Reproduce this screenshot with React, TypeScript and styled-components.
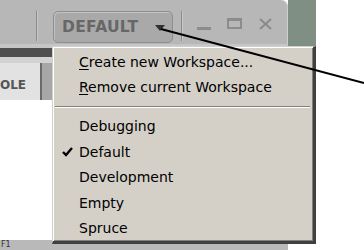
import { FC } from "react";
import styled, { createGlobalStyle } from "styled-components";

const GlobalStyle = createGlobalStyle`
  html, body {
    margin: 0;
    padding: 0;
    background: #ffffff;
    overflow: hidden;
  }
`;

const Stage = styled.div({
  position: "relative",
  width: "364px",
  height: "250px",
  overflow: "hidden",
  display: "grid",
  gridTemplateColumns: "288px 28px 1fr",
  alignItems: "start",
  fontFamily: '"DejaVu Sans", sans-serif',
});

const Window = styled.div({
  display: "flex",
  flexDirection: "column",
  height: "250px",
  background: "#b7b7b7",
  borderTopRightRadius: "7px",
  boxShadow: "inset -1px 0 0 #cfcfcf",
});

const Backdrop = styled.div({
  background: "#7f8f83",
  height: "50px",
});

const Toolbar = styled.div({
  height: "44px",
  display: "flex",
  alignItems: "flex-start",
  paddingTop: "11px",
  boxSizing: "border-box",
});

const Separator = styled.div<{ $left: number }>(({ $left }) => ({
  width: "1px",
  height: "30px",
  marginLeft: `${$left}px`,
  background: "#8a8a8a",
  boxShadow: "1px 0 0 #c8c8c8",
}));

const WorkspaceButton = styled.div({
  marginLeft: "16px",
  width: "120px",
  height: "32px",
  boxSizing: "border-box",
  display: "flex",
  alignItems: "center",
  paddingLeft: "8px",
  border: "1px solid #8e8e8e",
  borderRadius: "5px",
  background: "#a9a9a9",
  boxShadow: "inset 1px 1px 0 #c2c2c2",
  color: "#676767",
  fontWeight: 700,
  fontSize: "15.5px",
  letterSpacing: "0.3px",
});

const Caret = styled.span({
  marginLeft: "17px",
  width: 0,
  height: 0,
  borderLeft: "5px solid transparent",
  borderRight: "5px solid transparent",
  borderTop: "6px solid #303030",
  marginTop: "2px",
});

const WindowControls = styled.div({
  display: "flex",
  alignItems: "center",
  height: "30px",
  marginLeft: "15px",
  gap: "16px",
});

const Minimize = styled.div({
  width: "14px",
  height: "3px",
  background: "#8c8c8c",
  marginTop: "4px",
});

const Maximize = styled.div({
  width: "15px",
  height: "11px",
  boxSizing: "border-box",
  border: "2px solid #8c8c8c",
  borderTopWidth: "3px",
  marginTop: "-5px",
});

const CloseGlyph = styled.svg({
  marginTop: "-5px",
});

const TopGap = styled.div({
  height: "4px",
  background: "#c6c6c6",
});

const DarkBand = styled.div({
  height: "9px",
  background: "#4f4f4f",
});

const TabRow = styled.div({
  height: "43px",
  display: "flex",
  alignItems: "stretch",
  background: "#a7a7a7",
  paddingTop: "6px",
  boxSizing: "border-box",
  boxShadow: "inset 0 6px 0 #d2d2d2",
});

const Tab = styled.div({
  width: "42px",
  background: "#e2e2e2",
  borderRight: "2px solid #6a6a6a",
  display: "flex",
  alignItems: "center",
  color: "#555555",
  fontWeight: 700,
  fontSize: "12px",
  paddingLeft: "0px",
  paddingTop: "6px",
  boxSizing: "border-box",
});

const Content = styled.div({
  flex: 1,
  background: "#ffffff",
});

const StatusBar = styled.div({
  height: "10px",
  background: "#b9b9b9",
  color: "#333333",
  fontSize: "8px",
  lineHeight: "10px",
  paddingLeft: "1px",
});

const Menu = styled.div({
  position: "absolute",
  left: "52px",
  top: "46px",
  width: "264px",
  height: "198px",
  boxSizing: "border-box",
  background: "#d4d0c8",
  borderStyle: "solid",
  borderWidth: "1px 3px 3px 1px",
  borderColor: "#d4d0c8 #404040 #404040 #d4d0c8",
  boxShadow: "inset 1px 1px 0 #ffffff, inset -1px -1px 0 #808080",
  paddingTop: "2px",
  display: "flex",
  flexDirection: "column",
});

const MenuItem = styled.div({
  position: "relative",
  height: "25.5px",
  flexShrink: 0,
  display: "flex",
  alignItems: "center",
  paddingLeft: "26px",
  fontSize: "14px",
  color: "#000000",
  whiteSpace: "nowrap",
  "& u": { textUnderlineOffset: "2px" },
});

const Check = styled.svg({
  position: "absolute",
  left: "9px",
  top: "8px",
});

const MenuSeparator = styled.div({
  height: "13.5px",
  flexShrink: 0,
  display: "flex",
  alignItems: "center",
  padding: "0 3px 0 2px",
  "&::after": {
    content: '""',
    flex: 1,
    height: "1px",
    background: "#808080",
    boxShadow: "0 1px 0 #ffffff",
  },
});

const Pointer = styled.svg({
  position: "absolute",
  left: 0,
  top: 0,
  pointerEvents: "none",
});

const workspaces = ["Debugging", "Default", "Development", "Empty", "Spruce"];

const App: FC = () => {
  return (
    <>
      <GlobalStyle />
      <Stage>
        <Window>
          <Toolbar>
            <Separator $left={36} />
            <WorkspaceButton>
              DEFAULT
              <Caret />
            </WorkspaceButton>
            <Separator $left={8} />
            <WindowControls>
              <Minimize />
              <Maximize />
              <CloseGlyph width="15" height="12" viewBox="0 0 15 12">
                <path
                  d="M2 1 L13 11 M13 1 L2 11"
                  stroke="#8c8c8c"
                  strokeWidth="2.2"
                />
              </CloseGlyph>
            </WindowControls>
          </Toolbar>
          <TopGap />
          <DarkBand />
          <TabRow>
            <Tab>OLE</Tab>
          </TabRow>
          <Content />
          <StatusBar>F1</StatusBar>
        </Window>
        <Backdrop />
        <div />

        <Menu>
          <MenuItem>
            <span>
              <u>C</u>reate new Workspace...
            </span>
          </MenuItem>
          <MenuItem>
            <span>
              <u>R</u>emove current Workspace
            </span>
          </MenuItem>
          <MenuSeparator />
          {workspaces.map((name) => (
            <MenuItem key={name}>
              {name === "Default" && (
                <Check width="11" height="10" viewBox="0 0 11 10">
                  <path
                    d="M1 5 L4 8 L10 1"
                    fill="none"
                    stroke="#000"
                    strokeWidth="2.4"
                  />
                </Check>
              )}
              {name}
            </MenuItem>
          ))}
        </Menu>

        <Pointer width="364" height="250" viewBox="0 0 364 250">
          <line x1="161" y1="29" x2="364" y2="83" stroke="#000" strokeWidth="2" />
        </Pointer>
      </Stage>
    </>
  );
};

export default App;
